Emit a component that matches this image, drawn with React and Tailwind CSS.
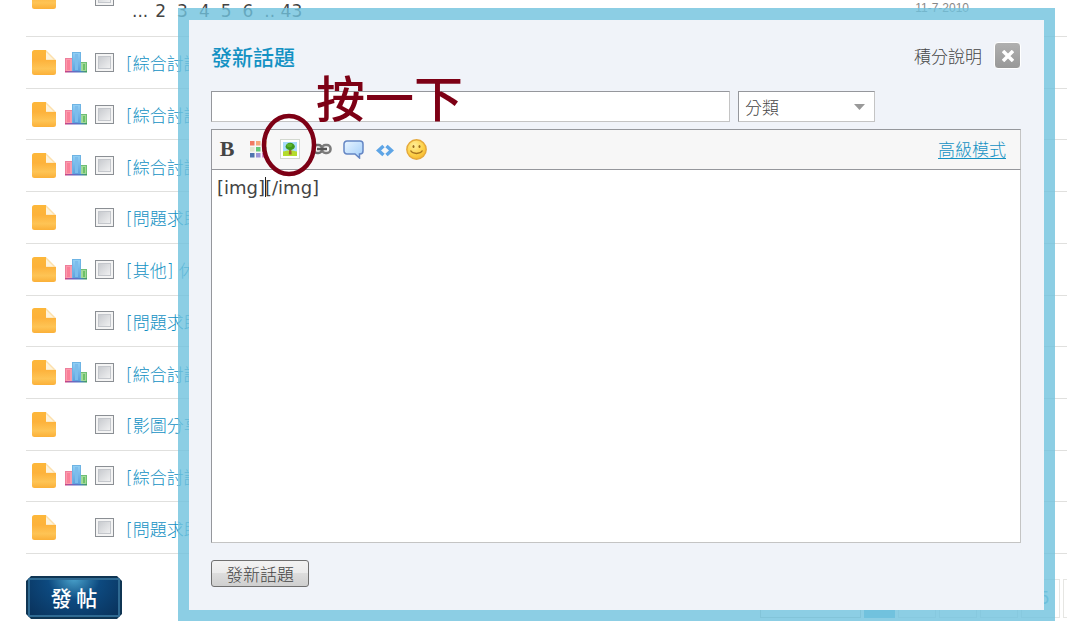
const topics = [
  { chart: true, title: "[綜合討論] 最新消息" },
  { chart: true, title: "[綜合討論] 最新消息" },
  { chart: true, title: "[綜合討論] 最新消息" },
  { chart: false, title: "[問題求助] 新手發問" },
  { chart: true, title: "[其他] 休閒話題" },
  { chart: false, title: "[問題求助] 新手發問" },
  { chart: true, title: "[綜合討論] 最新消息" },
  { chart: false, title: "[影圖分享] 圖片" },
  { chart: true, title: "[綜合討論] 最新消息" },
  { chart: false, title: "[問題求助] 新手發問" },
];

function FolderIcon() {
  return (
    <svg width="24" height="25" viewBox="0 0 24 25" className="shrink-0" aria-hidden="true">
      <defs>
        <linearGradient id="folder" x1="0" y1="0" x2="0" y2="1">
          <stop offset="0" stopColor="#fdb73a" />
          <stop offset="0.4" stopColor="#fdb23b" />
          <stop offset="0.75" stopColor="#fec455" />
          <stop offset="1" stopColor="#fbb038" />
        </linearGradient>
      </defs>
      <path d="M2.5 0H14v10h10v12.500a2.500 2.500 0 0 1-2.500 2.500h-19A2.500 2.500 0 0 1 0 22.500v-20A2.500 2.500 0 0 1 2.500 0z" fill="url(#folder)" />
      <path d="M14 0l10 10H14z" fill="#fde0ab" />
      <path d="M14 2v7.500h7.500z" fill="#fef3dc" />
    </svg>
  );
}

function ChartIcon() {
  return (
    <svg width="22" height="21" viewBox="0 0 22 21" className="shrink-0" aria-hidden="true">
      <defs>
        <linearGradient id="base" x1="0" x2="1">
          <stop offset="0" stopColor="#d2407c" />
          <stop offset="0.4" stopColor="#6a68c4" />
          <stop offset="0.7" stopColor="#4c7fc4" />
          <stop offset="1" stopColor="#3f9f55" />
        </linearGradient>
        <linearGradient id="blue" x1="0" y1="0" x2="0" y2="1">
          <stop offset="0" stopColor="#92d0f5" />
          <stop offset="1" stopColor="#5c9fdc" />
        </linearGradient>
      </defs>
      <rect x="0.500" y="6.500" width="7" height="13" fill="#fb9aac" stroke="#ee7f9c" />
      <rect x="2" y="8" width="3" height="10" fill="#fa7f98" />
      <rect x="15.500" y="10.500" width="6" height="9" fill="#a3d99a" stroke="#6fbf74" />
      <rect x="18" y="12" width="2" height="6" fill="#6cc268" />
      <rect x="7.500" y="0.500" width="8" height="19" fill="url(#blue)" stroke="#6eb4e4" />
      <rect x="10" y="2" width="3" height="16" fill="#7cbdec" />
      <rect x="0" y="19" width="22" height="1.500" fill="url(#base)" />
    </svg>
  );
}

function RowCheck({ label }) {
  return (
    <input
      type="checkbox"
      aria-label={label}
      className="m-0 size-[19px] shrink-0 appearance-none border border-[#8b8f94] bg-linear-to-br from-[#bfc2c7] to-[#fafafa] shadow-[inset_0_0_0_2px_#f4f4f4,inset_0_0_0_3px_#c4c7cc]"
    />
  );
}

function TopicRow({ chart, title }) {
  return (
    <li className="flex flex-1 items-center border-b border-[#e0e0de] pl-1.5">
      <FolderIcon />
      <span className="ml-[9px] mr-2 flex w-[22px] shrink-0">{chart && <ChartIcon />}</span>
      <RowCheck label={title} />
      <a
        href="#topic"
        className="ml-3 pt-1 whitespace-nowrap font-['DejaVu_Sans','Noto_Sans_CJK_TC',sans-serif] text-[17px] leading-6 text-[#1391c3]"
      >
        {title}
      </a>
    </li>
  );
}

const tools = [
  {
    name: "粗體",
    icon: <span className="font-['Liberation_Serif',serif] text-[22px] leading-5 font-bold text-[#454545]">B</span>,
  },
  {
    name: "顏色",
    icon: (
      <svg width="18" height="17" viewBox="0 0 18 17">
        <rect x="0" y="0" width="4.500" height="4.500" fill="#f07a62" />
        <rect x="6" y="0" width="4.500" height="4.500" fill="#f5a878" />
        <rect x="12" y="0" width="4.500" height="4.500" fill="#f3cf6a" />
        <rect x="0" y="6" width="4.500" height="4.500" fill="#e3e8cf" />
        <rect x="6" y="6" width="4.500" height="4.500" fill="#63c877" />
        <rect x="12" y="6" width="4.500" height="4.500" fill="#8fd39a" />
        <rect x="0" y="12" width="4.500" height="4.500" fill="#4f74ae" />
        <rect x="6" y="12" width="4.500" height="4.500" fill="#9c95d8" />
        <rect x="12" y="12" width="4.500" height="4.500" fill="#d68fd0" />
      </svg>
    ),
  },
  {
    name: "圖片",
    marked: true,
    icon: (
      <svg width="20" height="20" viewBox="0 0 20 20">
        <rect x="0.500" y="0.500" width="19" height="19" fill="#fff" stroke="#d3d8cf" />
        <rect x="3" y="3" width="14" height="14" fill="#a9dcfb" />
        <path d="M3 12.500c4-1.500 10-1.500 14 0V17H3z" fill="#b4dc2c" />
        <path d="M9.300 10h1.900l.5 5.500H8.800z" fill="#a5672c" />
        <ellipse cx="10.200" cy="7.500" rx="4.600" ry="3.700" fill="#3f9a1d" />
        <ellipse cx="9.500" cy="6.300" rx="2.800" ry="1.900" fill="#5cb52c" />
      </svg>
    ),
  },
  {
    name: "連結",
    icon: (
      <svg width="20" height="12" viewBox="0 0 20 12" fill="none">
        <rect x="1.500" y="2" width="8.500" height="8" rx="3.500" stroke="#6d6d6d" strokeWidth="2.500" />
        <rect x="10" y="2" width="8.500" height="8" rx="3.500" stroke="#7b7b7b" strokeWidth="2.500" />
        <path d="M5 6h10" stroke="#555" strokeWidth="2.500" />
      </svg>
    ),
  },
  {
    name: "引用",
    icon: (
      <svg width="21" height="19" viewBox="0 0 21 19">
        <defs>
          <linearGradient id="bubble" x1="0" y1="0" x2="1" y2="1">
            <stop offset="0" stopColor="#e9f5ff" />
            <stop offset="1" stopColor="#9fcdfa" />
          </linearGradient>
        </defs>
        <path
          d="M4 1h13a3 3 0 0 1 3 3v7a3 3 0 0 1-3 3H16.500V18l-4.500-4H4A3 3 0 0 1 1 11V4A3 3 0 0 1 4 1z"
          fill="url(#bubble)"
          stroke="#6486c4"
          strokeWidth="1.500"
        />
      </svg>
    ),
  },
  {
    name: "代碼",
    icon: (
      <svg width="18" height="15" viewBox="0 0 18 15" fill="none" stroke="#5ea5e6" strokeWidth="3.500">
        <path d="M7.500 4L2.500 8.500l5 4.500M10.500 4l5 4.500-5 4.500" />
      </svg>
    ),
  },
  {
    name: "表情",
    icon: (
      <svg width="21" height="21" viewBox="0 0 21 21">
        <defs>
          <radialGradient id="face" cx="0.4" cy="0.3" r="0.75">
            <stop offset="0" stopColor="#ffee9a" />
            <stop offset="0.6" stopColor="#fdd24a" />
            <stop offset="1" stopColor="#f5b52c" />
          </radialGradient>
        </defs>
        <circle cx="10.500" cy="10.500" r="9.700" fill="url(#face)" stroke="#e5a93c" strokeWidth="1.400" />
        <ellipse cx="7.500" cy="7.500" rx="1" ry="1.500" fill="#9a6a1c" />
        <ellipse cx="13.500" cy="7.500" rx="1" ry="1.500" fill="#9a6a1c" />
        <path d="M4.500 11.500c2.500 4 9.500 4 12 0" fill="none" stroke="#a8741f" strokeWidth="1.300" />
      </svg>
    ),
  },
];

function Annotation() {
  return (
    <>
      <svg width="56" height="66" viewBox="0 0 56 66" className="pointer-events-none absolute -left-[17px] -top-[25px] z-10 max-w-none" aria-hidden="true">
        <ellipse cx="28" cy="33" rx="25" ry="29" fill="none" stroke="#7d0015" strokeWidth="4.500" />
      </svg>
      <span className="pointer-events-none absolute -top-[66px] left-[38px] z-10 whitespace-nowrap text-[49px] leading-[49px] font-medium text-[#7d0015]">
        按一下
      </span>
    </>
  );
}

function Toolbar() {
  return (
    <div className="mt-[7px] flex h-10 items-center justify-between border border-b-0 border-[#c4c4c4] border-t-[#95979c] border-l-[#95979c] bg-[#f7f7f7] pr-3.5 pb-px pl-[3px]">
      <div className="flex w-[213px] justify-between">
        {tools.map((tool) => (
          <div key={tool.name} className="relative">
            <button type="button" aria-label={tool.name} className="flex size-6 items-center justify-center">
              {tool.icon}
            </button>
            {tool.marked && <Annotation />}
          </div>
        ))}
      </div>
      <a href="#advanced" className="text-[17px] leading-6 text-[#1391c3] underline underline-offset-2">
        高級模式
      </a>
    </div>
  );
}

const field = "border border-[#c4c4c4] border-t-[#95979c] border-l-[#95979c] bg-white text-[#444]";

function PostDialog() {
  return (
    <div className="absolute inset-x-0 top-2 pl-[178px] pr-3">
      <div role="dialog" aria-label="發新話題" className="bg-[#6fc2dd]/80 px-[11px] pt-3 pb-[11px]">
        <form className="bg-[#f0f3f9] pt-[22px] pr-[23px] pb-[23px] pl-[22px]">
          <header className="flex items-center justify-between">
            <h2 className="pt-0.5 text-[21px] leading-[25px] font-medium text-[#1391c3]">發新話題</h2>
            <div className="flex items-center gap-3">
              <a href="#points" className="text-[17px] leading-6 text-[#444]">積分說明</a>
              <button type="button" aria-label="關閉" className="flex size-[27px] items-center justify-center rounded-sm border border-white bg-linear-to-b from-[#b0b0b0] to-[#989898]">
                <svg width="12" height="12" viewBox="0 0 12 12" stroke="#fff" strokeWidth="3.500">
                  <path d="M1 1l10 10M11 1L1 11" />
                </svg>
              </button>
            </div>
          </header>
          <div className="mt-[22px] mr-[146px] flex gap-2">
            <input type="text" aria-label="標題" className={`${field} h-[31px] min-w-0 flex-1 px-1.5 text-[17px] outline-none`} />
            <div className="relative w-[137px]">
              <select aria-label="分類" className={`${field} h-[31px] w-full appearance-none px-1.5 text-[17px]`}>
                <option>分類</option>
              </select>
              <svg width="11" height="6" viewBox="0 0 11 6" className="pointer-events-none absolute top-[13px] right-2.5" aria-hidden="true">
                <path d="M0 0h11L5.500 6z" fill="#999" />
              </svg>
            </div>
          </div>
          <Toolbar />
          <div className="relative">
            <textarea
              aria-label="內容"
              defaultValue="[img][/img]"
              className={`${field} block h-[374px] w-full resize-none px-[5px] py-[7px] font-['DejaVu_Sans',sans-serif] text-[18px] leading-[22px] font-normal outline-none`}
            />
            <span className="absolute top-2 left-[54px] h-5 w-px bg-[#222]" />
          </div>
          <button type="submit" className="mt-[17px] block h-[27px] w-[98px] rounded-[3px] border border-[#707070] bg-[linear-gradient(#f2f2f2,#ebebeb_50%,#dddddd_50%,#cfcfcf)] text-[17px] leading-6 text-[#444]">
            發新話題
          </button>
        </form>
      </div>
    </div>
  );
}

function PostButton() {
  return (
    <button type="button" className="h-[43px] w-24 shrink-0 border-2 border-[#0f3553] bg-[radial-gradient(ellipse_at_50%_0%,#4aa3cc_0%,#0d4a80_40%,#093058_100%)] text-[21px] font-medium text-white shadow-[inset_0_0_0_2px_#2f6a92] [clip-path:polygon(5px_0,calc(100%-5px)_0,100%_5px,100%_calc(100%-5px),calc(100%-5px)_100%,5px_100%,0_calc(100%-5px),0_5px)]">
      發 帖
    </button>
  );
}

export default function App() {
  return (
    <div className="relative h-screen overflow-hidden bg-white font-['Noto_Sans_CJK_TC',sans-serif] font-light">
      <main className="-mt-11 pl-[26px]">
        <div className="flex h-[81px] items-center border-b border-[#e0e0de] pl-1.5">
          <FolderIcon />
          <span className="ml-[9px] mr-2 w-[22px] shrink-0" />
          <RowCheck label="主題" />
          <nav className="mt-[30px] ml-3 flex flex-1 gap-[11px] pl-1.5 font-['DejaVu_Sans',sans-serif] text-[17px] leading-6 font-normal text-[#444]">
            <span className="-mr-1">...</span>
            <a href="#p2">2</a>
            <a href="#p3">3</a>
            <a href="#p4">4</a>
            <a href="#p5">5</a>
            <a href="#p6">6</a>
            <a href="#p43" className="whitespace-pre">.. 43</a>
          </nav>
          <time className="mt-6 mr-[98px] font-['Liberation_Sans',sans-serif] text-xs font-normal text-[#888]">11-7-2010</time>
        </div>
        <ul className="flex h-[517px] flex-col">
          {topics.map((topic, i) => (
            <TopicRow key={i} {...topic} />
          ))}
        </ul>
        <footer className="mt-[22px] flex items-start">
          <PostButton />
          <nav className="mt-[3px] ml-[638px] flex gap-[3px] font-['DejaVu_Sans',sans-serif] text-[17px] leading-9 font-normal text-[#1f9bc9]/70">
            <span className="h-[39px] w-[101px] shrink-0 border border-[#ccccc8]" />
            <span className="h-[39px] w-[31px] shrink-0 bg-[#1f9bc9]/60" />
            <a href="#n2" className="h-[39px] w-[38px] shrink-0 border border-[#e6e6e3] text-center">2</a>
            <a href="#n3" className="h-[39px] w-[38px] shrink-0 border border-[#e6e6e3] text-center">3</a>
            <a href="#n4" className="h-[39px] w-[38px] shrink-0 border border-[#e6e6e3] text-center">4</a>
            <a href="#n5" className="h-[39px] w-[39px] shrink-0 border border-[#e6e6e3] pl-2 text-center">5</a>
            <span className="h-[39px] w-[38px] shrink-0 border border-[#e6e6e3]" />
          </nav>
        </footer>
      </main>
      <PostDialog />
    </div>
  );
}
